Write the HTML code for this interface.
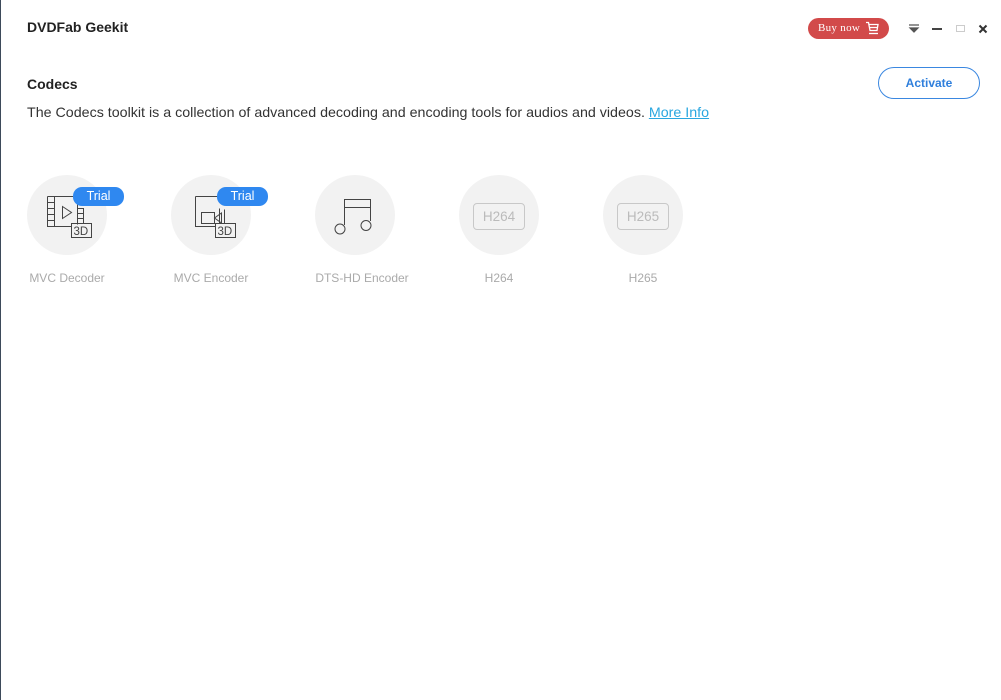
<!DOCTYPE html>
<html><head><meta charset="utf-8"><style>
*{margin:0;padding:0;box-sizing:border-box}
body{width:1001px;height:700px;background:#fff;position:relative;overflow:hidden;font-family:"Liberation Sans",Arial,sans-serif}
.lb{position:absolute;left:0;top:0;width:1px;height:700px;background:#3d4a5a}
.abs{position:absolute}
.title{left:27px;top:19px;font-size:14px;font-weight:bold;color:#222}
.h{left:27px;top:76px;font-size:14px;font-weight:bold;color:#222}
.desc{left:27px;top:105px;font-size:14.25px;color:#333}
.desc a{color:#2aa7e0;text-decoration:underline}
.buy{left:808px;top:18px;width:81px;height:21px;border-radius:11px;background:#d24a4a;color:#fff;font-family:"Liberation Serif",serif;font-size:11px;line-height:21px;padding-left:10px;letter-spacing:0.3px}
.act{left:878px;top:67px;width:102px;height:32px;border:1px solid #3a87e0;border-radius:16px;color:#2f7fdc;font-size:12px;font-weight:bold;text-align:center;line-height:30px}
.c{width:80px;height:80px;border-radius:50%;background:#f2f2f2;top:175px}
.lbl{top:271px;width:144px;text-align:center;font-size:12px;color:#aaa}
.trial{width:51px;height:19px;border-radius:9px;background:#2f88f0;color:#fff;font-size:12.5px;text-align:center;line-height:19px;top:187px}
.hb{width:52px;height:27px;border:1px solid #c8c8c8;border-radius:4px;color:#bbb;font-size:13.5px;text-align:center;line-height:25px;top:203px}
</style></head><body>
<div class="lb"></div>
<div class="abs title">DVDFab Geekit</div>
<div class="abs buy">Buy now<svg width="14" height="14" viewBox="0 0 14 14" style="position:absolute;left:57px;top:3px" fill="none" stroke="#fff" stroke-width="1.3"><path d="M1 1.5h2.5l1.5 8h7l1-6H4"/><path d="M4.5 6.5h8"/><path d="M4 12.5h9"/></svg></div>
<svg class="abs" style="left:908px;top:24px" width="12" height="10"><path d="M1 1h10M2 4h8L6 8z" stroke="#555" fill="#555" stroke-width="1.2"/></svg>
<div class="abs" style="left:932px;top:28px;width:10px;height:2px;background:#444"></div>
<div class="abs" style="left:956px;top:25px;width:9px;height:7px;border:1px solid #ccc"></div>
<svg class="abs" style="left:978px;top:24px" width="10" height="10"><path d="M1.5 1.5l7 7M8.5 1.5l-7 7" stroke="#333" stroke-width="2"/></svg>
<div class="abs h">Codecs</div>
<div class="abs act">Activate</div>
<div class="abs desc">The Codecs toolkit is a collection of advanced decoding and encoding tools for audios and videos. <a>More Info</a></div>

<div class="abs c" style="left:27px"></div>
<div class="abs c" style="left:171px"></div>
<div class="abs c" style="left:315px"></div>
<div class="abs c" style="left:459px"></div>
<div class="abs c" style="left:603px"></div>

<svg class="abs" style="left:27px;top:175px" width="80" height="80" fill="none" stroke="#444" stroke-width="1"><path d="M20.5 21.5h30v28M20.5 21.5v30h24M27.5 21.5v30M20.5 27.5h7M20.5 33.5h7M20.5 39.5h7M20.5 45.5h7"/><path d="M35.5 31.5v12l9-6z"/><path d="M50.5 33.5h6v15M50.5 38.5h6M50.5 43.5h6"/><rect x="44.5" y="48.5" width="20" height="14"/><text x="46.5" y="60" font-size="11.5" fill="#444" stroke="none" font-family="Liberation Sans">3D</text></svg>
<div class="abs trial" style="left:73px">Trial</div>

<svg class="abs" style="left:171px;top:175px" width="80" height="80" fill="none" stroke="#444" stroke-width="1"><path d="M24.5 21.5h24M24.5 21.5v30h20M48.5 33.5v15"/><rect x="30.5" y="37.5" width="13" height="11"/><path d="M43.5 43l7-5v10z"/><path d="M53.5 34.5v14"/><rect x="44.5" y="48.5" width="20" height="14"/><text x="46.5" y="60" font-size="11.5" fill="#444" stroke="none" font-family="Liberation Sans">3D</text></svg>
<div class="abs trial" style="left:217px">Trial</div>

<svg class="abs" style="left:315px;top:175px" width="80" height="80" fill="none" stroke="#444" stroke-width="1"><path d="M29.5 50V24.5h26V46M29.5 32.5h26"/><circle cx="25" cy="54" r="5"/><circle cx="51" cy="50.5" r="5"/></svg>

<div class="abs hb" style="left:473px">H264</div>
<div class="abs hb" style="left:617px">H265</div>

<div class="abs lbl" style="left:-5px">MVC Decoder</div>
<div class="abs lbl" style="left:139px">MVC Encoder</div>
<div class="abs lbl" style="left:290px">DTS-HD Encoder</div>
<div class="abs lbl" style="left:427px">H264</div>
<div class="abs lbl" style="left:571px">H265</div>
</body></html>
